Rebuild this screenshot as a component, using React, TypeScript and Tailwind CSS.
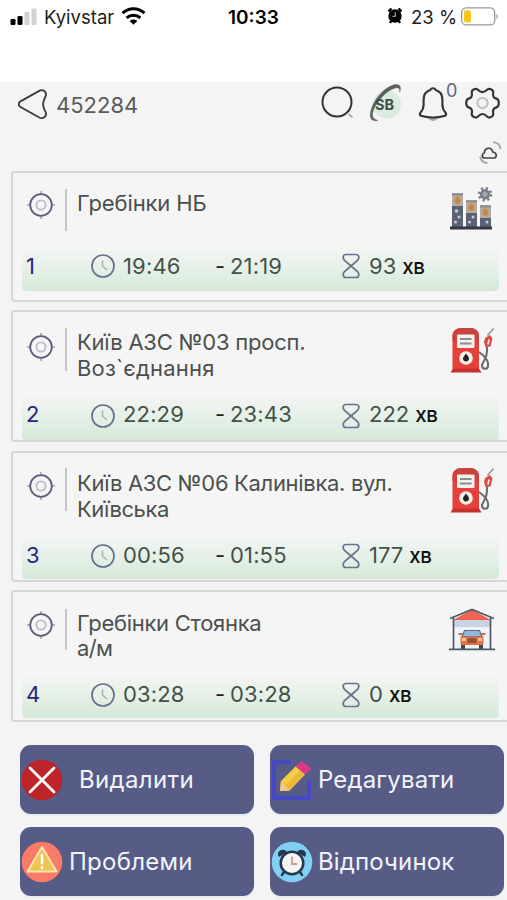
import type { ReactNode } from 'react';
import clsx from 'clsx';

type Line = {
  text: string;
  className: string;
};

type Stop = {
  id: number;
  lines: Line[];
  start: string;
  end: string;
  minutes: number;
  icon: ReactNode;
  cardClass: string;
  targetClass: string;
  dividerClass: string;
  titleClass: string;
  iconClass: string;
  stripClass: string;
  valueClass: string;
};

const SignalIcon = () => (
  <svg width="27" height="18" viewBox="0 0 27 18">
    <rect x="0.5" y="12" width="5" height="6" rx="1.3" fill="#000" />
    <rect x="7.5" y="9" width="5" height="9" rx="1.3" fill="#000" />
    <rect x="14.5" y="5" width="5" height="13" rx="1.3" fill="#d2d2d2" />
    <rect x="21.5" y="1.5" width="5" height="16.5" rx="1.3" fill="#d2d2d2" />
  </svg>
);

const WifiIcon = () => (
  <svg width="25" height="18" viewBox="0 0 25 18" fill="none" stroke="#000" strokeWidth="3">
    <path d="M1.5 6.2C8 .4 17 .4 23.5 6.2" />
    <path d="M5.6 10.9c4-3.700 9.800-3.700 13.800 0" />
    <path d="M12.5 17.800 8.700 14c2.200-2 5.400-2 7.600 0z" fill="#000" stroke="none" />
  </svg>
);

const AlarmIcon = () => (
  <svg width="16" height="17" viewBox="0 0 16 17">
    <path d="M1.500 4.500 4.500 1.500M14.500 4.500 11.500 1.500M3 16l1.500-2.500M13 16l-1.500-2.500" stroke="#000" strokeWidth="2.400" />
    <circle cx="8" cy="9" r="6.700" fill="#000" />
    <path d="M8.300 5.300v4H5.500" fill="none" stroke="#ccc" strokeWidth="1" />
  </svg>
);

const BatteryIcon = () => (
  <svg width="38" height="19" viewBox="0 0 38 19">
    <rect x="0.7" y="0.9" width="33" height="17" rx="4.500" fill="#fff" stroke="#999" strokeWidth="1.300" />
    <rect x="3" y="3.200" width="7" height="12.400" rx="2" fill="#f3c81c" />
    <path d="M35.500 7c1.900.8 1.900 4.200 0 5z" fill="#999" />
  </svg>
);

const BackIcon = () => (
  <svg width="30" height="31" viewBox="0 0 30 31" fill="none" stroke="#3d3d40" strokeWidth="1.900">
    <path d="M2.500 12.300 21.200 1.800c4-2 8 1.500 6.400 5.400-3.400 6.500-3.400 9.800 0 15.800 1.700 4-2.300 7.500-6.300 5.500L2.500 18c-2.300-1.400-2.300-4.300 0-5.700z" />
  </svg>
);

const SearchIcon = () => (
  <svg width="34" height="34" viewBox="0 0 34 34" fill="none">
    <circle cx="16" cy="16" r="14.500" stroke="#333338" strokeWidth="2" />
    <path d="m27.500 28 4 3.500" stroke="#aaa" strokeWidth="2" />
  </svg>
);

const LogoIcon = () => (
  <svg width="36" height="40" viewBox="0 0 36 40">
    <circle cx="19" cy="21.500" r="14" fill="#dcebdf" />
    <path
      d="M10 37.300c-7 2.300-9-3.500-7-10C6 16 17 3.500 27 1.500c5-.8 6.500 2.500 4.800 7.500.2-3.500-1-4.700-4.500-4C19 7 9 18 5.500 27c-2 5.500-1 9.500 4.500 10.300z"
      fill="#5a625e"
      stroke="#5a625e"
      strokeWidth="0.400"
    />
    <text x="7" y="26.500" fontFamily="Inter, sans-serif" fontSize="14.500" fontWeight="700" fill="#404d45">
      SB
    </text>
  </svg>
);

const BellIcon = () => (
  <svg width="30" height="36" viewBox="0 0 30 36" fill="none">
    <path d="M10 31.500c1.500 4.500 8.500 4.500 10 0z" fill="#aaa" />
    <path
      d="M15 2.200c-1.300 0-2.200.7-2.600 1.700C8 5.100 5.600 9 5.600 13.500v5c0 3.500-1.200 6-3.200 8.200-1.100 1.600-.6 2.800 1.300 3.300 7.200 1.900 15.400 1.900 22.600 0 1.900-.5 2.400-1.700 1.300-3.300-2-2.200-3.200-4.700-3.200-8.200v-5c0-4.500-2.400-8.400-6.800-9.600-.4-1-1.300-1.700-2.600-1.700z"
      stroke="#333338"
      strokeWidth="2.100"
    />
  </svg>
);

const GearIcon = () => (
  <svg width="35" height="35" viewBox="0 0 36 36" fill="none">
    <path
      d="M13 3.600c-2.400-1.800-6.800.5-6 3.600.8 3.600-.8 5.300-3.300 5.800C.4 14 .4 21 3.700 22c2.500.7 4.100 2.300 3.300 5.900-.8 3.300 3.800 6 6.300 3.500 3.200-3.400 6.200-3.400 9.400 0 2.500 2.500 7.100-.2 6.300-3.500-.8-3.600.8-5.200 3.300-5.900 3.300-1 3.300-8 0-9-2.500-.5-4.100-2.200-3.300-5.800.8-3.100-3.600-5.400-6-3.600-3.600 3.600-6.800 3.600-10 0z"
      stroke="#333338"
      strokeWidth="2.200"
    />
    <circle cx="18" cy="17.500" r="5.300" stroke="#bdbdbd" strokeWidth="2" />
  </svg>
);

const SyncIcon = () => (
  <svg width="24" height="25" viewBox="0 0 24 25" fill="none">
    <path d="M6.500 18c-3 0-2.800-4.500-.2-5C6.500 7.300 13.500 6.500 14.800 12c4.500.5 4.500 6 .9 6z" stroke="#444" strokeWidth="1.700" />
    <path d="M15 2.200C19.500 2.500 22 5 22.500 9M2 16.500c.8 3.800 3.500 6.500 7.500 6.500" stroke="#a5a5a5" strokeWidth="1.800" />
  </svg>
);

const TargetIcon = () => (
  <svg width="28" height="28" viewBox="0 0 28 28" fill="none">
    <path d="M14 0v4M14 24v4M0 14h4M24 14h4" stroke="#a3a2ad" strokeWidth="1.500" />
    <circle cx="14" cy="14" r="10.800" stroke="#5f5b78" strokeWidth="1.800" />
    <circle cx="14" cy="14" r="4.600" stroke="#bebdca" strokeWidth="1.900" />
  </svg>
);

const ClockIcon = () => (
  <svg width="24" height="24" viewBox="0 0 24 24" fill="none">
    <circle cx="12" cy="12" r="11" stroke="#69708c" strokeWidth="1.700" />
    <path d="M11.500 6.500V12l4.500 4" stroke="#a9b4b5" strokeWidth="1.500" />
  </svg>
);

const HourglassIcon = () => (
  <svg width="18" height="26" viewBox="0 0 18 26" fill="none" stroke="#69708c" strokeWidth="1.700">
    <path d="M4 1.500h10c3.300 0 3.500 3.800 1.500 5.800L9 13 2.500 7.300C.5 5.300.7 1.500 4 1.500zM4 24.500h10c3.300 0 3.500-3.800 1.500-5.800L9 13l-6.500 5.700c-2 2-1.800 5.800 1.500 5.800z" />
  </svg>
);

const DepotIcon = () => (
  <svg width="44" height="44" viewBox="0 0 44 44">
    <path d="M3 6.500h11V40H3zM17 13.500h11V40H17zM31 18.500h11V40H31z" fill="#5b6276" />
    <path d="M3 6.500h11V19H3zM17 13.500h11V26H17zM31 18.500h11V31H31z" fill="#b5aaa0" />
    <path d="M3 6.500h11v2H3zM17 13.500h11v2H17zM31 18.500h11v2H31z" fill="#8d8b8c" />
    <path
      d="M8.500 8.500c.5 2 3 3 3 5.200 0 4-6 4-6 0 0-2.200 2.500-3.200 3-5.200zM22.500 15.500c.5 2 3 3 3 5.200 0 4-6 4-6 0 0-2.200 2.500-3.200 3-5.200zM36.500 20.500c.5 2 3 3 3 5.200 0 4-6 4-6 0 0-2.200 2.500-3.200 3-5.200z"
      fill="#cd8637"
    />
    <path d="M1 39.500h42v3H1z" fill="#343747" />
    <g fill="#c8cbd4">
      <circle cx="7.500" cy="24" r="1.800" />
      <circle cx="10" cy="30" r="1.500" />
      <circle cx="6.500" cy="35" r="1.500" />
      <circle cx="24" cy="30" r="1.500" />
      <circle cx="20.500" cy="35" r="1.500" />
      <circle cx="38" cy="35" r="1.500" />
    </g>
    <circle cx="36" cy="7.300" r="6" fill="none" stroke="#777b86" strokeWidth="2.600" strokeDasharray="2.200 2.510" />
    <circle cx="36" cy="7.300" r="3.900" fill="#a4a5aa" stroke="#777b86" strokeWidth="2.400" />
  </svg>
);

const FuelIcon = () => (
  <svg width="46" height="47" viewBox="0 0 46 47">
    <path d="M30 25c7 5 10 9 9 14-.5 4-6 3.500-6-.5 0-3.500 5-6 5-14.500v-4" fill="none" stroke="#676b72" strokeWidth="2.100" />
    <path d="M3.500 42V9c0-5 4-8 9-8H21c5 0 9 3 9 8v33z" fill="#e6403a" />
    <path d="M3.500 14V9c0-5 4-8 9-8H21c5 0 9 3 9 8v5h-3.500V8h-19v6z" fill="#c9433e" />
    <path d="M1.500 45.500 4 41.500h26l2.500 4z" fill="#c8302e" />
    <rect x="8" y="7.500" width="17.500" height="13.500" rx="1" fill="#f2f1ee" />
    <path d="M11 12h11.500M11 16.500h11.500" stroke="#8b8b90" strokeWidth="1.800" />
    <circle cx="17" cy="31" r="6.800" fill="#f5efea" />
    <path d="M17 26.500c1 2 3 3 3 5 0 4-6 4-6 0 0-2 2-3 3-5z" fill="#242126" />
    <path d="m44.500 1.500-6 7" stroke="#999" strokeWidth="1.800" />
    <path d="m36 11 5-3 2.500 3.500-2 8-5 .5-1.500-5z" fill="#df4a43" />
    <path d="m40 12.500-1 5" stroke="#f2f1ee" strokeWidth="1.600" />
  </svg>
);

const GarageIcon = () => (
  <svg width="46" height="43" viewBox="0 0 46 43">
    <path d="M4.500 10h37v31h-37z" fill="#eef3f9" />
    <path d="M5 12h36v7H5z" fill="#c9d3e2" />
    <path d="M4 12 23 1.500 42 12z" fill="#ee6450" />
    <path d="M1 10.500 23 1.500l22 9M4.500 10v31M41.500 10v31M0 41.300h46" fill="none" stroke="#50596b" strokeWidth="1.700" />
    <path d="M9.500 26h4M32.500 26h4" stroke="#d85f45" strokeWidth="2" />
    <path d="M12 37v4h4v-4zM30 37v4h4v-4z" fill="#37495b" />
    <path d="M13 28.500 15.500 22.500h15l2.500 6z" fill="#8fb8da" stroke="#5b6d84" strokeWidth="1.200" />
    <path d="M11.500 28.500h23V37h-23z" fill="#e9703f" />
    <path d="M18.500 30h9v5h-9z" fill="#94503f" />
    <path d="M13 30h4v3h-4zM29 30h4v3h-4z" fill="#f8c68e" />
  </svg>
);

const DeleteIcon = () => (
  <svg width="42" height="42" viewBox="0 0 42 42">
    <circle cx="21" cy="21" r="20.300" fill="#bf242b" />
    <path d="m9 9 24 24M33 9 9 33" stroke="#fff" strokeWidth="2.800" strokeLinecap="round" />
  </svg>
);

const EditIcon = () => (
  <svg width="42" height="42" viewBox="0 0 42 42">
    <path d="M20 3H3v36h35V22" fill="none" stroke="#4549c3" strokeWidth="4" />
    <path d="m9 32 1-10 15-15 9 8.500L18.500 31.500z" fill="#f6cd45" />
    <path d="m14 27 15-15.500 4.500 4-15 16z" fill="#edb93b" />
    <path d="m9 32 .8-9 8.700 8.500z" fill="#f5c795" />
    <path d="m24.500 7.500 6-5.500 10 7.500-6.500 6z" fill="#d83b86" />
  </svg>
);

const WarningIcon = () => (
  <svg width="42" height="42" viewBox="0 0 42 42">
    <circle cx="21" cy="21" r="20.300" fill="#fa7c68" />
    <path d="M21 6 6.500 30.500h29z" fill="#f3c352" stroke="#f8e6b1" strokeWidth="2" strokeLinejoin="round" />
    <path d="M21 14v8M21 26v1" stroke="#fff" strokeWidth="2.600" strokeLinecap="round" />
  </svg>
);

const RestIcon = () => (
  <svg width="42" height="42" viewBox="0 0 42 42">
    <circle cx="21" cy="21" r="20.300" fill="#80cff5" />
    <path d="M8 16c-4-6 5-10 8-5zM34 16c4-6-5-10-8-5z" fill="#27384c" />
    <path d="m13 31-2 3M29 31l2 3" stroke="#27384c" strokeWidth="2.500" strokeLinecap="round" />
    <circle cx="21" cy="22" r="11.300" fill="#f5f4f3" stroke="#27384c" strokeWidth="2.500" />
    <path d="M21 15.500V23h5" fill="none" stroke="#d39a8d" strokeWidth="1.800" />
  </svg>
);

const stops: Stop[] = [
  {
    id: 1,
    lines: [{ text: 'Гребінки НБ', className: 'tracking-[-0.1px]' }],
    start: '19:46',
    end: '21:19',
    minutes: 93,
    icon: <DepotIcon />,
    cardClass: 'mb-[8px] h-[131px]',
    targetClass: 'mt-[18px]',
    dividerClass: 'mt-[16px] h-[42px]',
    titleClass: 'pt-[18px]',
    iconClass: 'mt-[14px]',
    stripClass: 'mt-[76px] h-[42px] pb-[8px]',
    valueClass: '',
  },
  {
    id: 2,
    lines: [
      { text: 'Київ АЗС №03 просп.', className: 'tracking-[-0.22px]' },
      { text: 'Воз`єднання', className: 'tracking-[0.2px]' },
    ],
    start: '22:29',
    end: '23:43',
    minutes: 222,
    icon: <FuelIcon />,
    cardClass: 'mb-[9px] h-[132px]',
    targetClass: 'mt-[21px]',
    dividerClass: 'mt-[16px] h-[43px]',
    titleClass: 'pt-[18px]',
    iconClass: 'mt-[15px]',
    stripClass: 'mt-[83px] h-[45px] pb-[3px]',
    valueClass: 'pb-[4px]',
  },
  {
    id: 3,
    lines: [
      { text: 'Київ АЗС №06 Калинівка. вул.', className: 'tracking-[-0.32px]' },
      { text: 'Київська', className: 'tracking-[-0.45px]' },
    ],
    start: '00:56',
    end: '01:55',
    minutes: 177,
    icon: <FuelIcon />,
    cardClass: 'mb-[8px] h-[131px]',
    targetClass: 'mt-[19px]',
    dividerClass: 'mt-[15px] h-[43px]',
    titleClass: 'pt-[18px]',
    iconClass: 'mt-[14px]',
    stripClass: 'mt-[83px] h-[43px] pb-[4px]',
    valueClass: 'pb-[1px]',
  },
  {
    id: 4,
    lines: [
      { text: 'Гребінки Стоянка', className: 'tracking-[-0.28px]' },
      { text: 'а/м', className: 'tracking-[-0.7px]' },
    ],
    start: '03:28',
    end: '03:28',
    minutes: 0,
    icon: <GarageIcon />,
    cardClass: 'h-[132px]',
    targetClass: 'mt-[19px]',
    dividerClass: 'mt-[17px] h-[41px]',
    titleClass: 'pt-[18.500px]',
    iconClass: 'mt-[16px]',
    stripClass: 'mt-[83px] h-[43px] pb-[3px]',
    valueClass: 'pb-[2px]',
  },
];

const actions = [
  { label: 'Видалити', icon: <DeleteIcon />, textClass: 'ml-[16px] tracking-[0.35px]' },
  { label: 'Редагувати', icon: <EditIcon />, textClass: 'ml-[5px] tracking-[0.15px]' },
  { label: 'Проблеми', icon: <WarningIcon />, textClass: 'ml-[6px] tracking-[0.25px]' },
  { label: 'Відпочинок', icon: <RestIcon />, textClass: 'ml-[5px] tracking-[0.15px]' },
];

const StatusBar = () => (
  <div className="flex h-[82px] items-start bg-white pl-[10px] pt-[7px] text-[#1d1d1d]">
    <SignalIcon />
    <span className="ml-[7px] w-[77px] text-[18.500px] leading-[21px]">Kyivstar</span>
    <WifiIcon />
    <span className="ml-[82px] w-[60px] text-[19px] font-semibold leading-[21px] text-black">10:33</span>
    <div className="ml-[99px]">
      <AlarmIcon />
    </div>
    <span className="ml-[8px] w-[50px] whitespace-nowrap text-[18.500px] leading-[21px]">23 %</span>
    <BatteryIcon />
  </div>
);

const Header = () => (
  <header className="h-[89px]">
    <div className="flex h-[46px] items-start">
      <div className="ml-[18px] mt-[7px]">
        <BackIcon />
      </div>
      <span className="ml-[8px] mt-[9px] w-[254px] text-[22px] leading-7 text-[#5a5a5a]">452284</span>
      <div className="ml-[11px] mt-[4px]">
        <SearchIcon />
      </div>
      <div className="ml-[13px] mt-px">
        <LogoIcon />
      </div>
      <div className="relative ml-[14px] mt-[4px]">
        <BellIcon />
        <span className="absolute left-[28px] top-[-6px] text-[18px] leading-[21px] text-[#64648c]">0</span>
      </div>
      <div className="ml-[17px] mt-[4px]">
        <GearIcon />
      </div>
    </div>
    <div className="mr-[5px] mt-[12px] flex justify-end">
      <SyncIcon />
    </div>
  </header>
);

const StopCard = ({ stop }: { stop: Stop }) => (
  <div
    className={clsx(
      'flex w-[520px] rounded-[4px] border-2 border-[#d5d7d6] bg-[#f5f5f5]',
      stop.cardClass,
    )}
  >
    <div className="grid w-[497px]">
      <div className="col-start-1 row-start-1 flex h-[76px] items-start">
        <div className={clsx('ml-[14px]', stop.targetClass)}>
          <TargetIcon />
        </div>
        <div className={clsx('ml-[10px] w-[1.500px] bg-[#c4c5c4]', stop.dividerClass)} />
        <div className={clsx('ml-[10.500px] w-[372px] text-[22px] leading-[25.500px] text-[#4b504d]', stop.titleClass)}>
          {stop.lines.map((line) => (
            <p key={line.text} className={clsx('whitespace-nowrap', line.className)}>
              {line.text}
            </p>
          ))}
        </div>
        <div className={stop.iconClass}>{stop.icon}</div>
      </div>
      <div
        className={clsx(
          'col-start-1 row-start-1 ml-[9px] flex w-[477px] items-center self-start rounded-b-[4px] bg-linear-to-b from-[#f3f5f3] via-[#e5f0e7] to-[#d5e9d9] text-[22px] text-[#435247]',
          stop.stripClass,
        )}
      >
        <span className={clsx('ml-[4px] w-[65px] text-[#29247d]', stop.valueClass)}>{stop.id}</span>
        <ClockIcon />
        <span className={clsx('ml-[8px] w-[92px] tracking-[0.15px]', stop.valueClass)}>{stop.start}</span>
        <span className={clsx('w-[15px] text-[#222]', stop.valueClass)}>-</span>
        <span className={clsx('w-[112px] tracking-[0.15px]', stop.valueClass)}>{stop.end}</span>
        <HourglassIcon />
        <span className={clsx('ml-[9px] whitespace-nowrap', stop.valueClass)}>
          {stop.minutes}
          <span className="ml-[6px] text-[20.500px] font-medium tracking-[-0.4px] text-[#111]">хв</span>
        </span>
      </div>
    </div>
  </div>
);

const App = () => {
  return (
    <div className="h-[900px] w-[507px] overflow-hidden bg-[#f4f4f5] font-['Inter','Liberation_Sans',sans-serif]">
      <StatusBar />
      <Header />
      <main className="pl-[11px]">
        {stops.map((stop) => (
          <StopCard key={stop.id} stop={stop} />
        ))}
      </main>
      <div className="ml-[20px] mt-[23px] grid w-[484px] grid-cols-2 gap-x-[16px] gap-y-[13px]">
        {actions.map((action) => (
          <button
            key={action.label}
            className="flex h-[69px] items-center rounded-[11px] bg-[#575c87] pl-[1px] text-left text-[24px] text-[#f2f3fa] shadow-[0_2px_1px_#e6edee]"
          >
            {action.icon}
            <span className={action.textClass}>{action.label}</span>
          </button>
        ))}
      </div>
    </div>
  );
};

export default App;
